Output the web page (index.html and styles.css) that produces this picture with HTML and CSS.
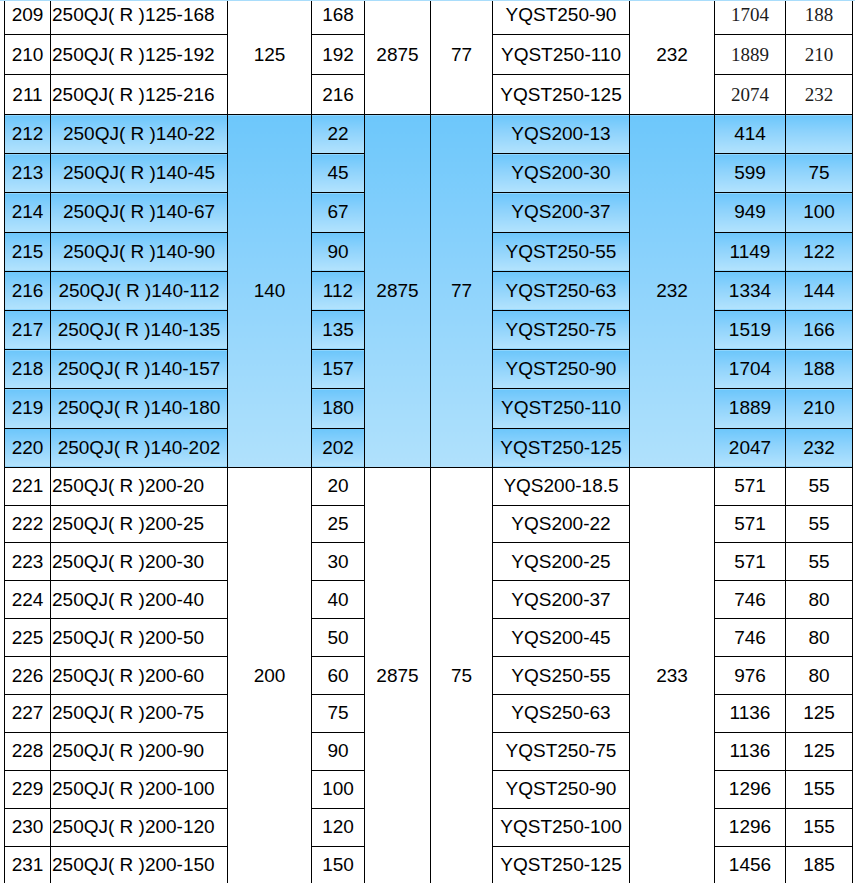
FILE: index.html
```html
<!DOCTYPE html>
<html>
<head>
<meta charset="utf-8">
<link rel="stylesheet" href="styles.css">
</head>
<body>
<div class="strip"></div>
<div class="view">
<table class="spec">
<colgroup>
<col class="c1"><col class="c2"><col class="c3"><col class="c4"><col class="c5"><col class="c6"><col class="c7"><col class="c8"><col class="c9"><col class="c10">
</colgroup>
<tbody>
<tr class="rw"><td>209</td><td class="l">250QJ( R )125-168</td><td rowspan="3">125</td><td>168</td><td rowspan="3">2875</td><td rowspan="3">77</td><td>YQST250-90</td><td rowspan="3">232</td><td class="s">1704</td><td class="s">188</td></tr>
<tr class="rw"><td>210</td><td class="l">250QJ( R )125-192</td><td>192</td><td>YQST250-110</td><td class="s">1889</td><td class="s">210</td></tr>
<tr class="rw"><td>211</td><td class="l">250QJ( R )125-216</td><td>216</td><td>YQST250-125</td><td class="s">2074</td><td class="s">232</td></tr>

<tr class="rb"><td class="b">212</td><td class="b">250QJ( R )140-22</td><td class="bs" rowspan="9">140</td><td class="b">22</td><td class="bs" rowspan="9">2875</td><td class="bs" rowspan="9">77</td><td class="b">YQS200-13</td><td class="bs" rowspan="9">232</td><td class="b">414</td><td class="b"></td></tr>
<tr class="rb"><td class="b">213</td><td class="b">250QJ( R )140-45</td><td class="b">45</td><td class="b">YQS200-30</td><td class="b">599</td><td class="b">75</td></tr>
<tr class="rb"><td class="b">214</td><td class="b">250QJ( R )140-67</td><td class="b">67</td><td class="b">YQS200-37</td><td class="b">949</td><td class="b">100</td></tr>
<tr class="rb"><td class="b">215</td><td class="b">250QJ( R )140-90</td><td class="b">90</td><td class="b">YQST250-55</td><td class="b">1149</td><td class="b">122</td></tr>
<tr class="rb"><td class="b">216</td><td class="b">250QJ( R )140-112</td><td class="b">112</td><td class="b">YQST250-63</td><td class="b">1334</td><td class="b">144</td></tr>
<tr class="rb"><td class="b">217</td><td class="b">250QJ( R )140-135</td><td class="b">135</td><td class="b">YQST250-75</td><td class="b">1519</td><td class="b">166</td></tr>
<tr class="rb"><td class="b">218</td><td class="b">250QJ( R )140-157</td><td class="b">157</td><td class="b">YQST250-90</td><td class="b">1704</td><td class="b">188</td></tr>
<tr class="rb"><td class="b">219</td><td class="b">250QJ( R )140-180</td><td class="b">180</td><td class="b">YQST250-110</td><td class="b">1889</td><td class="b">210</td></tr>
<tr class="rb"><td class="b">220</td><td class="b">250QJ( R )140-202</td><td class="b">202</td><td class="b">YQST250-125</td><td class="b">2047</td><td class="b">232</td></tr>

<tr class="rl"><td>221</td><td class="l">250QJ( R )200-20</td><td rowspan="11">200</td><td>20</td><td rowspan="11">2875</td><td rowspan="11">75</td><td>YQS200-18.5</td><td rowspan="11">233</td><td>571</td><td>55</td></tr>
<tr class="rl"><td>222</td><td class="l">250QJ( R )200-25</td><td>25</td><td>YQS200-22</td><td>571</td><td>55</td></tr>
<tr class="rl"><td>223</td><td class="l">250QJ( R )200-30</td><td>30</td><td>YQS200-25</td><td>571</td><td>55</td></tr>
<tr class="rl"><td>224</td><td class="l">250QJ( R )200-40</td><td>40</td><td>YQS200-37</td><td>746</td><td>80</td></tr>
<tr class="rl"><td>225</td><td class="l">250QJ( R )200-50</td><td>50</td><td>YQS200-45</td><td>746</td><td>80</td></tr>
<tr class="rl"><td>226</td><td class="l">250QJ( R )200-60</td><td>60</td><td>YQS250-55</td><td>976</td><td>80</td></tr>
<tr class="rl"><td>227</td><td class="l">250QJ( R )200-75</td><td>75</td><td>YQS250-63</td><td>1136</td><td>125</td></tr>
<tr class="rl"><td>228</td><td class="l">250QJ( R )200-90</td><td>90</td><td>YQST250-75</td><td>1136</td><td>125</td></tr>
<tr class="rl"><td>229</td><td class="l">250QJ( R )200-100</td><td>100</td><td>YQST250-90</td><td>1296</td><td>155</td></tr>
<tr class="rl"><td>230</td><td class="l">250QJ( R )200-120</td><td>120</td><td>YQST250-100</td><td>1296</td><td>155</td></tr>
<tr class="rl"><td>231</td><td class="l">250QJ( R )200-150</td><td>150</td><td>YQST250-125</td><td>1456</td><td>185</td></tr>
</tbody>
</table>
</div>
</body>
</html>
```

FILE: styles.css
```css
html, body {
  margin: 0;
  padding: 0;
  background: #ffffff;
}
body {
  width: 855px;
  height: 883px;
  overflow: hidden;
}
.strip {
  height: 1px;
  background: #a9ddfb;
}
.view {
  height: 882px;
  overflow: hidden;
  padding-left: 4px;
}
.spec {
  margin-top: -7px;
  border-collapse: collapse;
  table-layout: fixed;
  width: 848px;
  font-family: "Liberation Sans", Arial, sans-serif;
  font-size: 19px;
  color: #000;
}
.c1 { width: 46px; }
.c2 { width: 177px; }
.c3 { width: 84px; }
.c4 { width: 53px; }
.c5 { width: 66px; }
.c6 { width: 62px; }
.c7 { width: 137px; }
.c8 { width: 85px; }
.c9 { width: 71px; }
.c10 { width: 67px; }
.spec td {
  border: 1px solid #000;
  padding: 0;
  text-align: center;
  vertical-align: middle;
  white-space: nowrap;
  overflow: hidden;
  line-height: 20px;
}
.spec td.l {
  text-align: left;
  padding-left: 1px;
}
.spec td.s {
  font-family: "Liberation Serif", "Times New Roman", serif;
  color: #1c1c1c;
}
.rw { height: 40px; }
.rb { height: 39.2px; }
.rl { height: 37.9px; }
.spec td.b {
  background: linear-gradient(to bottom, #6cc6fb 0%, #8fd3fc 45%, #b3e3fd 100%);
}
.spec td.bs {
  background: linear-gradient(to bottom, #6dc7fb 0%, #90d4fc 50%, #b0e1fc 100%);
}
```
